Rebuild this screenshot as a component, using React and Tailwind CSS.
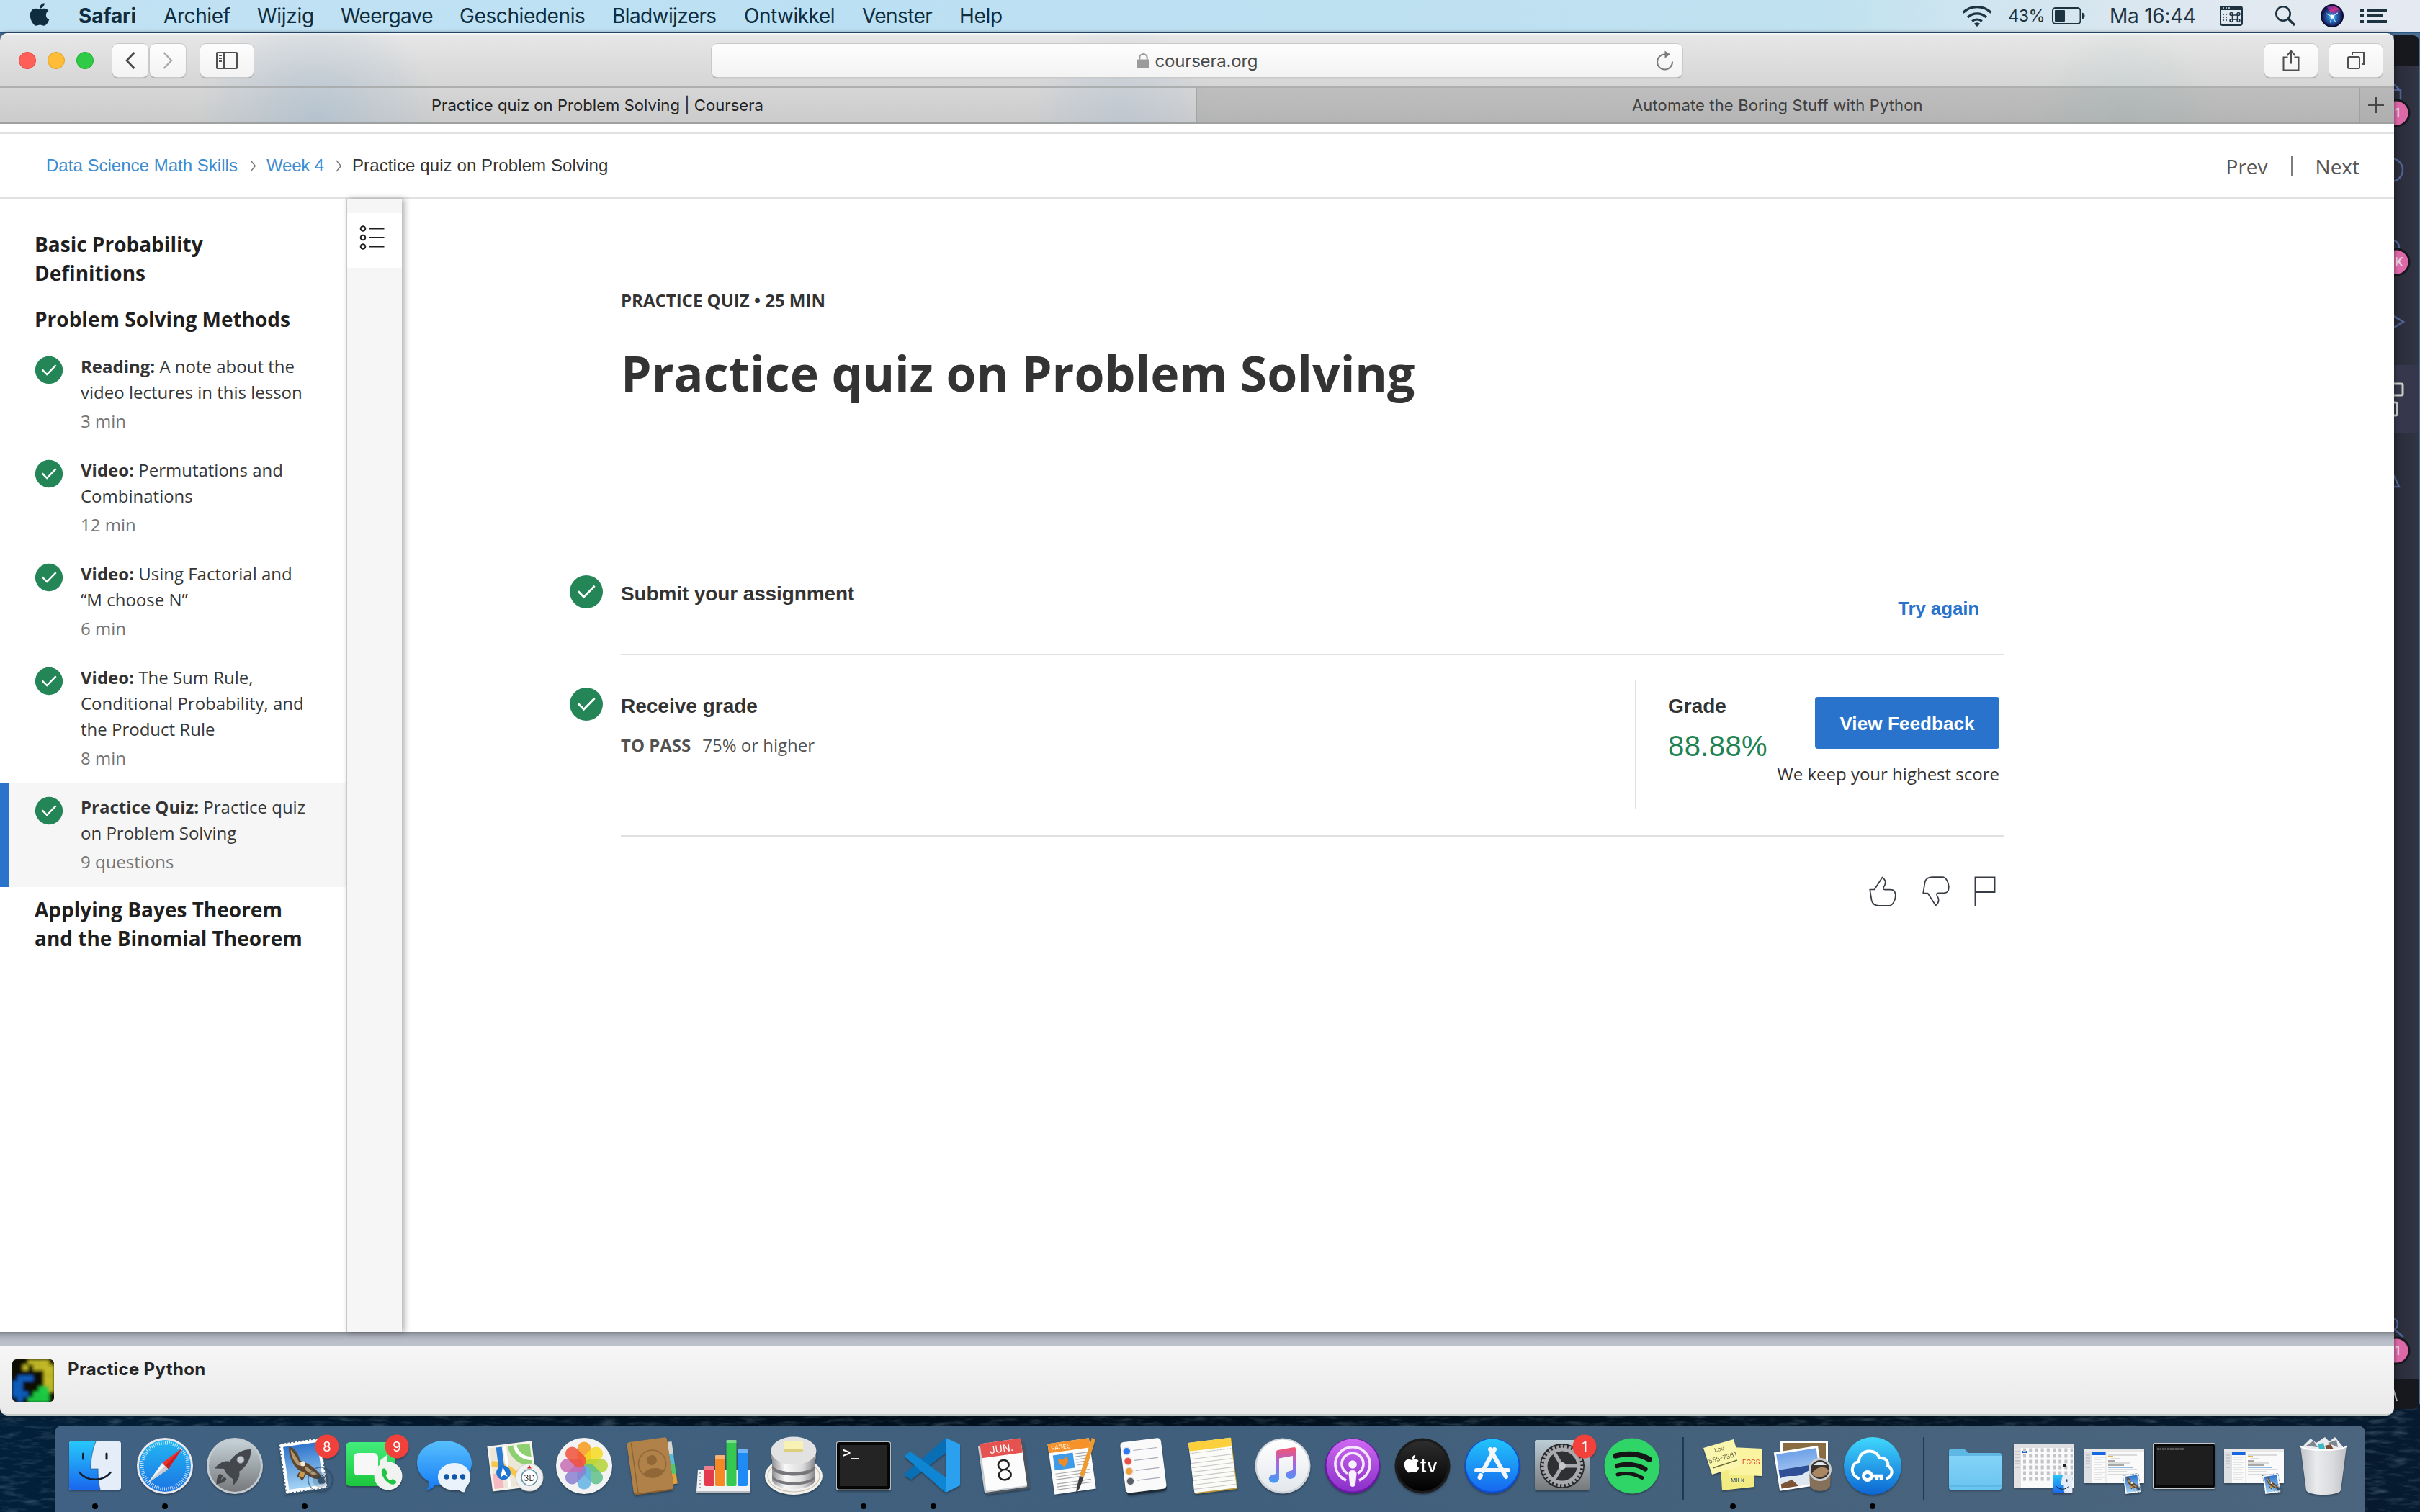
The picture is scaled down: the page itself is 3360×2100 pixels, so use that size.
import React from "react";
import { FaApple } from "react-icons/fa";

/* ---------- shared pieces ---------- */

const Check = ({ className }) => (
  <svg viewBox="0 0 48 48" className={className}>
    <circle cx="24" cy="24" r="23" fill="#248557" />
    <path d="M12.8 23.2 L20.6 31.2 L35.6 15.8" fill="none" stroke="#fff" strokeWidth="2.9" />
  </svg>
);

/* ---------- menu bar ---------- */

const MENU = [
  ["Archief", "w-[130px] tracking-[-0.4px]"],
  ["Wijzig", "w-[116px] tracking-[-0.3px]"],
  ["Weergave", "w-[165px] tracking-[-0.6px]"],
  ["Geschiedenis", "w-[212px] tracking-[-0.4px]"],
  ["Bladwijzers", "w-[183px] tracking-[-0.6px]"],
  ["Ontwikkel", "w-[164px] tracking-[-0.5px]"],
  ["Venster", "w-[135px] tracking-[-0.6px]"],
  ["Help", "w-[80px] tracking-[-0.3px]"],
];

function MenuBar() {
  return (
    <header className="flex h-[46px] shrink-0 items-center border-b-2 border-[#2c567e] bg-[linear-gradient(90deg,#c1e2f3_0%,#bce0f3_35%,#bfe1f0_75%,#cfe5ef_82%,#e0e8f0_92%,#e5eaf2_100%)] pl-[41px] text-[28px] leading-[44px] text-[#0f2d3e]">
      <FaApple className="-mt-[5px] mr-[40px] h-[36px] w-[28px]" />
      <span className="w-[118px] font-bold tracking-[-0.1px]">Safari</span>
      {MENU.map(([label, cls]) => (
        <span key={label} className={cls}>{label}</span>
      ))}
      <div className="ml-auto flex h-[44px] items-center pr-[46px] text-[#1d3340]">
        <svg viewBox="0 0 42 30" className="mr-[22px] h-[30px] w-[42px]" fill="none" stroke="currentColor" strokeWidth="3.2">
          <path d="M1.5 10.5 A28 28 0 0 1 40.500 10.500" />
          <path d="M8 17 A19 19 0 0 1 34 17" />
          <path d="M14.200 22.500 A10.500 10.500 0 0 1 27.800 22.500" />
          <path d="M21 30 L16.800 26 A6 6 0 0 1 25.200 26 Z" fill="currentColor" stroke="none" />
        </svg>
        <span className="w-[61px] text-[23.500px] tracking-[-0.6px]">43%</span>
        <svg viewBox="0 0 46 24" className="mr-[34px] h-[24px] w-[46px]">
          <rect x="1" y="1" width="38.500" height="22" rx="4" fill="none" stroke="currentColor" strokeWidth="2" />
          <rect x="4" y="4" width="14" height="16" rx="1" fill="currentColor" />
          <path d="M42 7.500 Q45.500 9 45.500 12 T42 16.500 Z" fill="currentColor" />
        </svg>
        <span className="w-[153px] tracking-[-0.25px]">Ma 16:44</span>
        <svg viewBox="0 0 32 28" className="mr-[44px] h-[28px] w-[32px]" fill="none" stroke="currentColor" strokeWidth="2">
          <rect x="1" y="1" width="30" height="26" rx="3" />
          <rect x="1" y="1" width="30" height="5" fill="currentColor" stroke="none" />
          <path d="M4 3 h2 M8 3 h2 M12 3 h2" stroke="#dce8f0" strokeWidth="1.600" />
          <path d="M4 12 h2 M8 12 h2 M4 16 h2 M8 16 h2 M4 20 h2 M8 20 h2" strokeWidth="1.600" />
          <g strokeWidth="1.500">
            <rect x="17.500" y="13" width="7" height="6" />
            <circle cx="16" cy="11.500" r="1.900" />
            <circle cx="26" cy="11.500" r="1.900" />
            <circle cx="16" cy="20.500" r="1.900" />
            <circle cx="26" cy="20.500" r="1.900" />
          </g>
        </svg>
        <svg viewBox="0 0 30 30" className="mr-[34px] h-[30px] w-[30px]" fill="none" stroke="currentColor" strokeWidth="2.600">
          <circle cx="12" cy="12" r="9.700" />
          <path d="M19 19 L28 28" strokeWidth="3.200" />
        </svg>
        <svg viewBox="0 0 32 32" className="mr-[23px] h-[32px] w-[32px]">
          <defs>
            <radialGradient id="siri" cx="0.500" cy="0.550" r="0.600">
              <stop offset="0" stopColor="#8df0ff" />
              <stop offset="0.300" stopColor="#2a7ac8" />
              <stop offset="0.800" stopColor="#181a5c" />
            </radialGradient>
            <linearGradient id="siri2" x1="0" y1="0" x2="0.600" y2="1">
              <stop offset="0" stopColor="#5a2a9a" />
              <stop offset="0.500" stopColor="#d0308c" />
              <stop offset="1" stopColor="#2448b0" stopOpacity="0.200" />
            </linearGradient>
          </defs>
          <circle cx="16" cy="16" r="16" fill="#0c1030" />
          <circle cx="16" cy="16" r="14" fill="url(#siri)" />
          <path d="M9 4 A14 14 0 0 1 29.500 14 L17 16 Z" fill="url(#siri2)" />
          <path d="M16 17 L8 13 M16 17 L13.500 25 M16 17 L23.500 12 M16 17 L20.500 24" stroke="#b9f5ff" strokeWidth="1.200" strokeLinecap="round" />
          <circle cx="16" cy="17" r="2.400" fill="#fff" />
        </svg>
        <svg viewBox="0 0 37 20" className="h-[20px] w-[37px]" fill="currentColor">
          <path d="M0 0h5v4H0z M9 0h28v4H9z M0 8h5v4H0z M9 8h22v4H9z M0 16h5v4H0z M9 16h28v4H9z" />
        </svg>
      </div>
    </header>
  );
}

/* ---------- Safari chrome ---------- */

const btn = "flex h-[46px] items-center justify-center rounded-[8px] bg-gradient-to-b from-[#fdfdfd] to-[#f3f3f3] shadow-[0_0_0_1px_#c9c9c9,0_2px_1px_0_#a0a0a0] text-[#4f4f4f]";

function Toolbar() {
  return (
    <div className="rounded-t-[10px] bg-[radial-gradient(ellipse_170px_170px_at_440px_125px,rgba(165,188,208,0.6),rgba(165,190,215,0)),radial-gradient(ellipse_130px_150px_at_1556px_130px,rgba(175,192,212,0.5),rgba(165,190,215,0)),radial-gradient(ellipse_130px_150px_at_2950px_125px,rgba(175,200,200,0.3),rgba(175,200,200,0)),linear-gradient(180deg,#fafafa_0px,#e6e6e6_4px,#d5d5d5_75px,#d6d6d6_76px,#cbcbcb_126px)]">
      <div className="flex h-[76px] items-center border-b-2 border-[#a9abab]/90 pl-[26px] pr-[16px] pt-[2px]">
        <div className="flex gap-[16px]">
          <i className="h-[24px] w-[24px] rounded-full border border-[#e0443e] bg-[#fe5f57]" />
          <i className="h-[24px] w-[24px] rounded-full border border-[#dea123] bg-[#febc38]" />
          <i className="h-[24px] w-[24px] rounded-full border border-[#1dad2b] bg-[#30cb46]" />
        </div>
        <div className="ml-[26px] flex gap-[2px]">
          <div className={`${btn} w-[50px]`}>
            <svg viewBox="0 0 14 24" className="h-[24px] w-[14px]" fill="none" stroke="#484848" strokeWidth="2.600"><path d="M12.500 1 L2 12 L12.500 23" /></svg>
          </div>
          <div className={`${btn} w-[50px]`}>
            <svg viewBox="0 0 14 24" className="h-[24px] w-[14px]" fill="none" stroke="#a8a8a8" strokeWidth="2.400"><path d="M1.500 1 L12 12 L1.500 23" /></svg>
          </div>
        </div>
        <div className={`${btn} ml-[20px] w-[74px]`}>
          <svg viewBox="0 0 30 24" className="h-[24px] w-[30px]" fill="none" stroke="currentColor" strokeWidth="2">
            <rect x="1" y="1" width="28" height="22" rx="1" />
            <path d="M11 1 V23" />
            <path d="M4 5 h4 M4 9 h4 M4 13 h4" />
          </svg>
        </div>
        <div className={`${btn} ml-[636px] w-[1348px]`}>
          <div className="ml-[38px] flex flex-1 items-center justify-center">
            <svg viewBox="0 0 18 22" className="mr-[8px] h-[21px] w-[17px]">
              <rect x="0" y="9" width="18" height="13" rx="1" fill="#9b9b9b" />
              <path d="M3.500 9 V6 a5.500 5 0 0 1 11 0 V9" fill="none" stroke="#9b9b9b" strokeWidth="2.200" />
            </svg>
            <span className="pt-[2px] text-[24px] leading-[44px] tracking-[-0.2px] text-[#4a4a4a]">coursera.org</span>
          </div>
          <svg viewBox="0 0 26 28" className="mr-[11px] h-[28px] w-[26px]" fill="none" stroke="#7b7b7b" strokeWidth="2">
            <path d="M23 15.500 A10.500 10.500 0 1 1 12.500 5.500 H19" />
            <path d="M12.500 0.500 L19.500 5.500 L12.500 11 Z" fill="#7b7b7b" stroke="none" />
          </svg>
        </div>
        <div className="ml-auto flex gap-[16px]">
          <div className={`${btn} w-[74px]`}>
            <svg viewBox="0 0 24 30" className="h-[30px] w-[24px]" fill="none" stroke="currentColor" strokeWidth="2">
              <path d="M7.500 10.500 H1.500 V28.500 H22.500 V10.500 H16.500" />
              <path d="M12 19.500 V2 M6.500 8 L12 1.800 L17.500 8" />
            </svg>
          </div>
          <div className={`${btn} w-[74px]`}>
            <svg viewBox="0 0 24 24" className="h-[24px] w-[24px]" fill="none" stroke="currentColor" strokeWidth="2">
              <rect x="1" y="7" width="16" height="16" rx="1.500" />
              <path d="M7 4.500 V1 H23 V17 H20" />
            </svg>
          </div>
        </div>
      </div>
      <div className="flex h-[50px] border-b-2 border-[#9fa0a0] text-[22px] leading-[49px]">
        <div className="w-[1660px] pl-[599px] tracking-[0.06px] text-[#222]">Practice quiz on Problem Solving | Coursera</div>
        <div className="w-[1615px] border-l-2 border-[#9c9c9c]/70 bg-black/[0.11] pl-[604px] tracking-[0.150px] text-[#404040]">Automate the Boring Stuff with Python</div>
        <div className="flex flex-1 items-center justify-center border-l-2 border-[#9c9c9c]/80 bg-black/[0.14] pr-[4px]">
          <svg viewBox="0 0 22 22" className="h-[22px] w-[22px]" stroke="#484848" strokeWidth="2"><path d="M11 0 V22 M0 11 H22" /></svg>
        </div>
      </div>
    </div>
  );
}

/* ---------- course page ---------- */

const Crumb = () => (
  <svg viewBox="0 0 9 18" className="h-[17px] w-[9px]" fill="none" stroke="#777" strokeWidth="1.500"><path d="M1 1 L7.500 9 L1 17" /></svg>
);

const LESSONS = [
  { kind: "Reading:", lines: ["A note about the", "video lectures in this lesson"], meta: "3 min" },
  { kind: "Video:", lines: ["Permutations and", "Combinations"], meta: "12 min" },
  { kind: "Video:", lines: ["Using Factorial and", "“M choose N”"], meta: "6 min" },
  { kind: "Video:", lines: ["The Sum Rule,", "Conditional Probability, and", "the Product Rule"], meta: "8 min" },
  { kind: "Practice Quiz:", lines: ["Practice quiz", "on Problem Solving"], meta: "9 questions", active: true },
];

function Sidebar() {
  const heading = "pb-[13px] pt-[11px] pl-[48px] text-[28px] font-bold leading-[40px] text-[#1f1f1f]";
  return (
    <aside className="w-[480px] pt-[32px] font-['Open_Sans',sans-serif]">
      <h2 className={heading}>Basic Probability<br />Definitions</h2>
      <h2 className={heading}>Problem Solving Methods</h2>
      {LESSONS.map((l) => (
        <div
          key={l.kind + l.meta}
          className={`flex border-l-[12px] pb-[17px] pl-[36px] pt-[15px] ${l.active ? "border-[#2a73cc] bg-[#f6f6f6]" : "border-transparent"}`}
        >
          <Check className="mr-[24px] mt-[3px] h-[40px] w-[40px] shrink-0" />
          <div className="text-[24px] leading-[36px] text-[#373737]">
            {l.lines.map((t, i) => (
              <div key={t} className="whitespace-nowrap">
                {i === 0 && <b className="font-bold text-[#333]">{l.kind} </b>}
                {t}
              </div>
            ))}
            <div className="mt-1 text-[#757575]">{l.meta}</div>
          </div>
        </div>
      ))}
      <h2 className={heading}>Applying Bayes Theorem<br />and the Binomial Theorem</h2>
    </aside>
  );
}

function Quiz() {
  const label = "text-[28px] font-bold leading-[36px] text-[#333]";
  return (
    <main className="flex-1 pl-[232px] pt-[123px] font-['Open_Sans',sans-serif] text-[#333]">
      <div className="pl-[72px]">
        <div className="text-[24px] font-bold leading-[36px]">PRACTICE QUIZ • 25 MIN</div>
        <h1 className="pt-[35px] text-[68px] font-bold leading-[96px] tracking-[-0.03px]">Practice quiz on Problem Solving</h1>
      </div>
      <section className="mt-[220px] w-[1992px]">
        <div className="flex">
          <div className="w-[72px] pt-[12px]"><Check className="h-[48px] w-[48px]" /></div>
          <div className="flex h-[124px] flex-1 justify-between border-b-2 border-[#e1e1e1] pt-[21px] font-['Liberation_Sans',sans-serif]">
            <div className={`${label} tracking-[-0.12px]`}>Submit your assignment</div>
            <div className="pr-[34px] pt-[20px] text-[26px] font-bold leading-[36px] tracking-[-0.15px] text-[#2a73cc]">Try again</div>
          </div>
        </div>
        <div className="flex">
          <div className="w-[72px] pt-[44px]"><Check className="h-[48px] w-[48px]" /></div>
          <div className="flex h-[252px] flex-1 border-b-2 border-[#e1e1e1]">
            <div className="w-[1408px] pt-[53px]">
              <div className={`${label} font-['Liberation_Sans',sans-serif]`}>Receive grade</div>
              <div className="flex gap-[16px] pt-[18px] text-[24px] leading-[36px] text-[#525252]">
                <b className="font-bold">TO PASS</b>
                <span>75% or higher</span>
              </div>
            </div>
            <div className="mt-[34px] flex h-[180px] flex-1 justify-between border-l-2 border-[#e1e1e1] pl-[44px]">
              <div className="w-[150px] pt-[19px] font-['Liberation_Sans',sans-serif]">
                <div className={label}>Grade</div>
                <div className="pt-[13px] text-[40px] leading-[48px] tracking-[0.4px] text-[#1f8354]">88.88%</div>
              </div>
              <div className="-ml-8 flex flex-1 flex-col items-end pr-[6px] pt-[24px]">
                <button className="h-[72px] w-[256px] rounded-[4px] bg-[#2a73cc] pt-[2px] font-['Liberation_Sans',sans-serif] text-[26px] font-bold tracking-[0.1px] text-white">View Feedback</button>
                <div className="whitespace-nowrap pt-[17px] text-[24px] leading-[36px]">We keep your highest score</div>
              </div>
            </div>
          </div>
        </div>
        <div className="flex justify-end pr-[11px] pt-[55px]">
          <Thumb className="h-[42px] w-[38px]" />
          <Thumb className="ml-[36px] h-[42px] w-[38px] -scale-y-100" />
          <svg viewBox="0 0 30 42" className="ml-[34px] h-[42px] w-[30px]" fill="none" stroke="#373c44" strokeWidth="1.900">
            <path d="M1.500 41 V1.500 H28.500 V22 H1.500" />
          </svg>
        </div>
      </section>
    </main>
  );
}

const Thumb = ({ className }) => (
  <svg viewBox="0 0 38 42" className={className} fill="none" stroke="#373c44" strokeWidth="1.700" strokeLinejoin="round">
    <path d="M1.200 18.500 H7.500 L18.500 1.500 C22 4 23.500 8 22 12 C21 14.500 19.500 15.500 20 17.500 C20.300 18.500 21 18.700 22 18.700 H30 C34.500 18.700 36.800 22 36.800 27 C36.800 33 33 40.800 28 40.800 H14 C8 40.800 4.800 39 3.600 33.500 Z" />
  </svg>
);

function Page() {
  return (
    <div className="flex h-[1678px] flex-col bg-white">
      <div className="h-[14px] border-b-2 border-[#e1e1e1]" />
      <nav className="flex h-[90px] items-center whitespace-nowrap border-b-2 border-[#e1e1e1] pl-[64px] font-['Liberation_Sans',sans-serif] text-[24px]">
        <span className="w-[283px] tracking-[0.02px] text-[#3d8ccf]">Data Science Math Skills</span>
        <Crumb />
        <span className="w-[110px] pl-[14px] tracking-[-0.2px] text-[#3d8ccf]">Week 4</span>
        <Crumb />
        <span className="pl-[14px] tracking-[0.1px] text-[#333]">Practice quiz on Problem Solving</span>
        <div className="ml-auto flex items-center pr-[48px] pt-[2px] font-['Open_Sans',sans-serif] text-[28px] text-[#555]">
          <span>Prev</span>
          <span className="mx-[32px] h-[28px] w-[2px] bg-[#7d7d7d]" />
          <span>Next</span>
        </div>
      </nav>
      <div className="flex flex-1">
        <Sidebar />
        <div className="w-[78px] border-l-2 border-[#c7c9c9] bg-[#f6f6f6] pt-[20px] shadow-[4px_0_8px_rgba(0,0,0,0.3)]">
          <div className="flex h-[76px] rounded-[2px] bg-white pl-[16px] pt-[16px]">
            <svg viewBox="0 0 36 36" className="h-[36px] w-[36px]" fill="none" stroke="#1f1f1f" strokeWidth="2">
              {[5.500, 18, 30.500].map((y) => (
                <g key={y}>
                  <circle cx="6" cy={y} r="3.300" />
                  <path d={`M14 ${y} H35.500`} />
                </g>
              ))}
            </svg>
          </div>
        </div>
        <Quiz />
      </div>
    </div>
  );
}

const PY = [
  "kkkyyyyk",
  "kkykyyyy",
  "kkkkkkyy",
  "kbbbkkyy",
  "bbkkkkyy",
  "bbkkkggy",
  "bbbkgggk",
  "kbkggggk",
];
const PYC = { k: "#0a0a06", y: "#c3bb25", b: "#0b5ec0", g: "#1fcb42" };

function ReadingPanel() {
  return (
    <div className="flex h-[96px] rounded-b-[10px] border-b-2 border-[#c4cac7] bg-gradient-to-b from-[#f6f6f6] to-[#e9e9e9] pl-[17px] pt-[18px]">
      <svg viewBox="0 0 58 60" className="h-[60px] w-[58px]">
        <clipPath id="pyc"><rect width="58" height="59" rx="6" /></clipPath>
        <filter id="pyb" x="0" y="0" width="1" height="1"><feGaussianBlur stdDeviation="2" /></filter>
        <g clipPath="url(#pyc)">
          <rect width="58" height="60" fill="#0a0a06" />
          <g filter="url(#pyb)">
            {PY.map((r, y) => r.split("").map((c, x) => (
              <rect key={`${x}-${y}`} x={x * 7.300} y={y * 7.500} width="7.500" height="7.700" fill={PYC[c]} />
            )))}
          </g>
        </g>
      </svg>
      <span className="pl-[19px] text-[24px] font-bold leading-[27px] tracking-[0.350px] text-[#262626]">Practice Python</span>
    </div>
  );
}

/* ---------- window peeking out behind Safari ---------- */

function BackWindow() {
  return (
    <div className="mt-[2px] h-[1909px] w-[35px] overflow-hidden rounded-r-[10px] border-t border-[#555a66] bg-[#2f3241]">
      <svg viewBox="0 0 36 1909" className="h-[1909px] w-[36px]" fill="none">
        <defs>
          <linearGradient id="bw" x1="0" x2="1"><stop offset="0" stopColor="#292b38" /><stop offset="1" stopColor="#323545" /></linearGradient>
        </defs>
        <rect width="36" height="1909" fill="url(#bw)" />
        <rect width="36" height="42" fill="#16181e" />
        <rect y="1866" width="36" height="43" fill="#16181e" />
        <path d="M-3 1897 L0 1884 L4 1897" stroke="#b9bcb8" strokeWidth="2.200" />
        <g stroke="#4f6294" strokeWidth="2.500">
          <path d="M-2 66 L8 76 H-2 M9 74 V98" />
          <circle cx="-4" cy="187" r="16" />
          <circle cx="-2" cy="294" r="9" />
          <path d="M-2 389 L13 398 L-2 407" />
          <path d="M-2 608 L7 627 H-2" />
          <circle cx="-3" cy="1790" r="8" />
          <path d="M0 1797 L13 1808" />
        </g>
        <rect y="458" width="36" height="95" fill="#36364c" />
        <rect x="34" y="458" width="2" height="95" fill="#c25a9a" />
        <g stroke="#c8cdc4" strokeWidth="3">
          <rect x="-8" y="484" width="20" height="16" rx="2" />
          <rect x="-8" y="510" width="12" height="18" rx="2" />
        </g>
        <g stroke="#16181e" strokeWidth="3" fill="#dd68a8">
          <circle cx="3" cy="108" r="18" />
          <circle cx="3" cy="315" r="18" />
          <circle cx="3" cy="1827" r="18" />
        </g>
        <g fill="#e6d3dd" fontSize="17" fontWeight="600" fontFamily="Inter, sans-serif">
          <text x="1" y="114">1</text>
          <text x="1" y="321">K</text>
          <text x="1" y="1833">1</text>
        </g>
      </svg>
    </div>
  );
}

/* ---------- dock ---------- */

const G = ({ id, a, b, m }) => (
  <linearGradient id={id} x1="0" y1="0" x2="0" y2="1">
    <stop offset="0" stopColor={a} />
    {m && <stop offset="0.500" stopColor={m} />}
    <stop offset="1" stopColor={b} />
  </linearGradient>
);

const FinderArt = () => (
  <g>
    <rect x="4" y="6" width="72" height="67" rx="3" fill="#e4edf8" />
    <path d="M7 6 H41 C36 18 34 30 34 44 H44 C44 55 45 65 47 73 H7 a3 3 0 0 1 -3 -3 V9 a3 3 0 0 1 3 -3Z" fill="url(#fnd)" />
    <path d="M41 6 C36 18 34 30 34 44 H44 C44 55 45 65 47 73" fill="none" stroke="#1d4f86" strokeWidth="1.200" opacity="0.600" />
    <path d="M23.500 23 V30 M56 23 V30" stroke="#12202e" strokeWidth="3" strokeLinecap="round" />
    <path d="M18.500 49 C28 62 52 62 61.500 49" fill="none" stroke="#12202e" strokeWidth="2.600" strokeLinecap="round" />
  </g>
);

const Badge = ({ t }) => (
  <g>
    <circle cx="71" cy="13" r="16.500" fill="#f2403a" />
    <text x="71" y="19.500" textAnchor="middle" fontSize="19" fill="#fff" fontFamily="Inter, sans-serif">{t}</text>
  </g>
);

const MailArt = () => (
  <g>
    <g transform="rotate(-8 38 40)">
      <rect x="9" y="5" width="58" height="70" fill="#fff" />
      <rect x="9" y="5" width="58" height="70" fill="none" stroke="#40607f" strokeWidth="3" strokeDasharray="2 3" />
      <rect x="10.500" y="6.500" width="55" height="67" fill="#fff" />
      <rect x="14" y="10" width="48" height="60" fill="url(#sky)" />
      <path d="M22 11 C30 13 33 22 35 32 L40 35 C49 40 57 49 61 58 C56 63 50 60 44 55 L40 52 L36 58 L33 60 L31 55 L27 55 L29 50 L33 46 C26 42 19 26 22 11Z" fill="#5f452e" />
      <path d="M24 15 C29 22 32 32 36 40 L31 38 C26 32 23 24 24 15Z" fill="#b29870" />
      <path d="M40 40 L56 54 L50 55 L41 47 Z" fill="#b29870" />
      <path d="M33 46 L39 50 L36 56 L30 53Z" fill="#c99a4c" />
      <circle cx="38" cy="37" r="3.500" fill="#f3ead8" />
    </g>
    <circle cx="62" cy="59" r="17" fill="none" stroke="#26425f" strokeWidth="1.500" opacity="0.600" />
    <circle cx="62" cy="59" r="11" fill="#26425f" opacity="0.250" />
    <g transform="translate(55.500 50)"><FaApple size={16} color="#1f3c58" opacity="0.800" /></g>
  </g>
);

const WindowArt = () => (
  <g>
    <rect x="-1" y="16" width="83" height="48" fill="#fafafa" />
    <rect x="-1" y="16" width="11" height="48" fill="#dedfe2" />
    <rect x="-1" y="16" width="83" height="5" fill="#e8e8e8" />
    <path d="M1 25h6M1 29h6M1 33h6M1 37h6M1 42h6" stroke="#b5b5b8" strokeWidth="1" />
    <rect x="10" y="21" width="19" height="4" fill="#1768e0" />
    <path d="M12 28h15M12 31h12M12 35h15M12 38h12M12 42h15M12 45h12M12 49h15M12 52h12M12 56h15M12 59h12" stroke="#cfcfcf" strokeWidth="1" />
    <path d="M29 21V64" stroke="#ddd" />
    <path d="M32 25h40M36 30h12M32 36h30M32 45h40M32 48h26M32 52h28" stroke="#bbb" strokeWidth="1" />
    <path d="M32 27h7" stroke="#e8b44a" strokeWidth="2" />
    <path d="M32 33h9M32 39h22" stroke="#555" strokeWidth="1.200" />
    <path d="M32 42h34" stroke="#6ba6e2" strokeWidth="1.300" />
    <g transform="translate(51 50) scale(0.370)"><MailArt /></g>
  </g>
);

const Petals = () => {
  const c = ["#f79a1c", "#f5d91f", "#b4d334", "#5fc08a", "#62b3e4", "#8a7fd0", "#c56cb5", "#f0513a"];
  return c.map((f, i) => (
    <rect key={f} x="30.500" y="6.500" width="19" height="33" rx="9.500" fill={f} opacity="0.850" transform={`rotate(${i * 45} 40 39.500)`} />
  ));
};

const ART = {
  finder: <FinderArt />,
  safari: (
    <g>
      <circle cx="40" cy="40" r="39" fill="#e9e9ec" />
      <circle cx="40" cy="40" r="36" fill="url(#saf)" />
      <circle cx="40" cy="40" r="32" fill="none" stroke="#fff" strokeWidth="5" strokeDasharray="0.900 1.890" opacity="0.850" />
      <path d="M64.500 15 L44.500 44.500 L36 36Z" fill="#f0302c" />
      <path d="M64.500 15 L44.500 44.500 L40 40Z" fill="#c9201f" />
      <path d="M16 64 L36 36 L44.500 44.500Z" fill="#f4f4f6" />
      <path d="M16 64 L40 40 L44.500 44.500Z" fill="#c9ccd2" />
    </g>
  ),
  launchpad: (
    <g>
      <circle cx="40" cy="40" r="39" fill="#c3cbd1" />
      <circle cx="40" cy="40" r="36" fill="url(#lp)" />
      <path d="M62.500 17 C50 17 40 23 33 34 C25 32 17 37 12 43.500 L25 44 L28 50 L34 56 L37 58 V68 C43 62 48 55 46 48 C57 40 62.500 30 62.500 17Z" fill="#44484c" />
      <circle cx="48" cy="31.500" r="5" fill="#c3cacf" stroke="#808589" />
      <path d="M19 51 C15 54 15 60 14.500 66 C20 64 27 63 28.500 58 L25.500 55 L20 60 L24 53Z" fill="#44484c" />
    </g>
  ),
  mail: <g><MailArt /><Badge t="8" /></g>,
  facetime: (
    <g>
      <rect x="0" y="7" width="69" height="61" rx="6" fill="url(#ft)" />
      <rect x="11" y="22" width="34" height="31" rx="6" fill="#f7f7f7" />
      <path d="M47 33 L58 24 V50 L47 43Z" fill="#f0f0f0" />
      <circle cx="59" cy="54" r="19.500" fill="#f1f3f1" />
      <path d="M50 46 c2 -4 5 -3 6 0 l1.500 3 c1 2 -2 3 -1.500 4.500 c1 3 3 5 5.500 6.500 c1.500 .5 2.500 -2.500 4.500 -1.500 l3 2 c2.500 2 .5 4 -2 5 c-8 2 -19 -12 -17 -19.500Z" fill="#20c544" />
      <Badge t="9" />
    </g>
  ),
  messages: (
    <g>
      <path d="M40 5 C61 5 78 18.500 78 36 S61 67 40 67 C36 67 32 66.500 28 65.500 C25 70 20 73 15 73.500 C18 70 19.500 66 19 62 C8.500 56.500 2 47 2 36 C2 18.500 19 5 40 5Z" fill="url(#msg)" />
      <path d="M54 36 C66 36 76 44 76 55.500 C76 61 74 66 70 69.500 C69.500 72.500 68.500 74.500 67.500 76.500 C64.500 76.500 62 75 60 73.500 C43 76 31 67 31 55.500 C31 44 42 36 54 36Z" fill="#eaf3fb" />
      <g fill="#1057a8"><circle cx="43" cy="55" r="3.700" /><circle cx="54" cy="55" r="3.700" /><circle cx="65.500" cy="55" r="3.700" /></g>
    </g>
  ),
  maps: (
    <g>
      <g transform="rotate(-7 36 40)">
        <rect x="6" y="9" width="62" height="63" fill="#f4f2ea" />
        <rect x="9" y="12" width="56" height="57" fill="#ece7d8" />
        <path d="M34 12 H65 V42 C48 42 36 30 34 12Z" fill="#8ecf72" />
        <path d="M44 12 C46 24 54 32 65 33" fill="none" stroke="#fff" strokeWidth="5" />
        <path d="M9 34 C25 36 45 50 52 69" fill="none" stroke="#f9c64a" strokeWidth="8" />
        <path d="M9 48 H22 V69 H9Z" fill="#f6b9c1" />
        <path d="M22 12 V50" stroke="#2a7bd4" strokeWidth="8" />
        <path d="M30 12 V69" stroke="#fff" strokeWidth="4" />
        <circle cx="24" cy="48" r="10" fill="#1d74d2" />
        <path d="M24 40 L29 54 L24 51 L19 54Z" fill="#fff" />
      </g>
      <circle cx="61" cy="56" r="19" fill="#f0f0f0" stroke="#c9c9c9" />
      <circle cx="61" cy="56" r="11" fill="#fff" stroke="#5b93a8" strokeWidth="1.500" />
      <path d="M61 39 L64 43.500 H58Z" fill="#d22" />
      <text x="61" y="60.500" textAnchor="middle" fontSize="11.500" fill="#333" fontFamily="Inter, sans-serif">3D</text>
    </g>
  ),
  photos: (
    <g>
      <circle cx="40" cy="40" r="39" fill="#f3f3f3" />
      <Petals />
    </g>
  ),
  contacts: (
    <g transform="rotate(-8 38 40)">
      <rect x="58" y="10" width="11" height="20" fill="#d6d6cf" />
      <rect x="58" y="27" width="11" height="15" fill="#58b9d8" />
      <rect x="58" y="41" width="11" height="15" fill="#55c46a" />
      <rect x="58" y="55" width="11" height="14" fill="#e3a13a" />
      <rect x="7" y="4" width="56" height="73" rx="4" fill="#8a5f30" />
      <rect x="7" y="3" width="56" height="72" rx="4" fill="#b08149" />
      <path d="M13 4 V75" stroke="#8f6533" strokeWidth="1.500" />
      <circle cx="38" cy="37" r="19" fill="none" stroke="#916737" strokeWidth="1.600" />
      <circle cx="38" cy="32" r="7" fill="#916737" />
      <path d="M24 50 C27 41 49 41 52 50 C45 58 31 58 24 50Z" fill="#916737" />
    </g>
  ),
  numbers: (
    <g>
      <path d="M4 45 H76 L77 75 H2Z" fill="#f3f3f5" />
      <path d="M2 75 H77 V77 H2Z" fill="#b9bcc2" />
      <rect x="13" y="40" width="14" height="28" rx="2" fill="#e33a4d" />
      <rect x="28" y="25" width="14" height="43" rx="2" fill="#f58a24" />
      <rect x="43.500" y="4" width="14" height="64" rx="2" fill="#35c951" />
      <rect x="59" y="17" width="14" height="51" rx="2" fill="#1f8cf5" />
      <g fill="#fff" opacity="0.350">
        <rect x="13" y="40" width="14" height="5" /><rect x="28" y="25" width="14" height="5" /><rect x="43.500" y="4" width="14" height="4" /><rect x="59" y="17" width="14" height="5" />
      </g>
      <path d="M7 49v2M7 54v2M7 59v2M7 64v2M7 69v2" stroke="#aaa" strokeWidth="2" />
    </g>
  ),
  sequel: (
    <g>
      <ellipse cx="40" cy="54" rx="40" ry="26" fill="#f2f1ee" />
      <ellipse cx="40" cy="54" rx="36" ry="22" fill="none" stroke="#c9c0ae" strokeWidth="1.200" />
      <path d="M10 30 V60 C14 76 66 76 70 60 V30Z" fill="url(#met)" />
      <path d="M10 38 C14 52 66 52 70 38 V43 C66 57 14 57 10 43Z M10 52 C14 66 66 66 70 52 V56 C66 70 14 70 10 56Z" fill="#77777b" />
      <path d="M9 20 V29 C12 48 68 48 71 29 V20Z" fill="url(#met)" />
      <ellipse cx="40" cy="19" rx="31.500" ry="19.500" fill="#e2e2e3" />
      <rect x="27" y="5" width="26" height="15" rx="3" fill="#f8f2b4" />
      <path d="M27 17 H53 V18 a3 3 0 0 1 -3 3 H30 a3 3 0 0 1 -3 -3Z" fill="#dccf7c" />
    </g>
  ),
  terminal: (
    <g>
      <rect x="2" y="6" width="76" height="68" rx="3" fill="#b9bcbf" />
      <rect x="3" y="7" width="74" height="65.500" rx="3" fill="#070707" />
      <rect x="7" y="11" width="66" height="57" fill="#242424" />
      <text x="11" y="28" fontSize="19" fontWeight="700" fill="#fff" fontFamily="Liberation Mono, monospace">&gt;_</text>
    </g>
  ),
  vscode: (
    <g>
      <path d="M57 1 L77 10 V67 L57 77 Z" fill="#2aa0ee" />
      <path d="M57 1 V22 L9 59 L1 54 V50Z" fill="#0a6eb4" />
      <path d="M8 20 L57 56 V77 L1 28 V25Z" fill="#0f86d4" />
    </g>
  ),
  calendar: (
    <g transform="translate(2 0) rotate(-8 40 40)">
      <rect x="9" y="10" width="62" height="66" rx="2" fill="#4b5660" />
      <rect x="7" y="7" width="60" height="66" rx="2" fill="#c8ccd0" />
      <rect x="10" y="5" width="57" height="66" rx="2" fill="#fcfcfc" />
      <path d="M10 5 H67 V25 H10Z" fill="#e5524f" />
      <text x="38.500" y="20.500" textAnchor="middle" fontSize="14" fill="#fff" fontFamily="Inter, sans-serif">JUN.</text>
      <text x="38.500" y="60" textAnchor="middle" fontSize="40" fill="#222" fontFamily="Inter, sans-serif" fontWeight="300">8</text>
    </g>
  ),
  pages: (
    <g>
      <g transform="rotate(-8 38 40)">
        <rect x="9" y="5" width="58" height="71" fill="#fbfbfb" />
        <rect x="9" y="5" width="58" height="13" fill="#f6922a" />
        <text x="13" y="15" fontSize="8.500" fill="#fff" fontFamily="Inter, sans-serif">PAGES</text>
        <rect x="14" y="22" width="28" height="21" fill="#3f9ae8" />
        <path d="M20 27 L26 30 L33 26 L34 33 L28 40 L22 35Z" fill="#f08a24" />
        <path d="M45 24h17M45 28h17M45 32h17M45 36h17M45 40h17M14 48h48M14 52h48M14 56h38M14 62h48M14 66h48M14 70h30" stroke="#aaa" strokeWidth="1.200" />
      </g>
      <path d="M66 1 L71 3 L55 55 L49 53Z" fill="#ef9a2c" />
      <path d="M54.500 56 L49 54 L45 70 L44 78 L49 71Z" fill="#3c3c40" />
    </g>
  ),
  reminders: (
    <g transform="rotate(-7 40 40)">
      <rect x="13" y="5" width="56" height="73" rx="5" fill="#1e2a36" />
      <rect x="12" y="4" width="57" height="71" rx="5" fill="#fafafa" />
      {[["#2c79f3", 17], ["#eb4f45", 31], ["#f0a03a", 45], ["#59606a", 59]].map(([f, y]) => (
        <g key={f}>
          <circle cx="20" cy={y} r="6" fill="#e4e4e8" />
          <circle cx="20" cy={y} r="4.700" fill={f} />
          <path d={`M29 ${y} H62`} stroke="#aab" strokeWidth="1.200" />
        </g>
      ))}
    </g>
  ),
  notes: (
    <g transform="rotate(-7 40 40)">
      <rect x="11" y="5" width="59" height="71" fill="#b89a3c" />
      <rect x="10" y="4" width="59" height="70" fill="#fbfbf8" />
      <rect x="10" y="4" width="59" height="12" fill="#fccf3c" />
      <path d="M11 19H68" stroke="#999" strokeDasharray="1 1" />
      <path d="M10 27h59M10 33h59M10 39h59M10 45h59M10 51h59M10 57h59M10 63h59M10 69h59" stroke="#c9c9cc" strokeWidth="1.200" />
    </g>
  ),
  music: (
    <g>
      <circle cx="40" cy="40" r="38.500" fill="#cfd4da" />
      <circle cx="40" cy="39.500" r="36" fill="url(#mus)" />
      <path d="M31 20 Q31 18.500 33 18 L56 14 Q58 14 58 16 V51 C58 56 54 58 50 58 C42 57 43 48 50 47 C53 46.500 54 46 54 43.500 V26 L35 29.500 V57 C35 62 30 64 26 63.500 C18 61.500 20 53 27 52 C30 51.500 31 51 31 49Z" fill="url(#mun)" />
    </g>
  ),
  podcasts: (
    <g>
      <circle cx="40" cy="40" r="38.500" fill="#6d17a8" />
      <circle cx="40" cy="39" r="36.500" fill="url(#pod)" />
      <g fill="none" stroke="#f4e8fc" strokeWidth="3.600">
        <path d="M31 60 A24 24 0 1 1 49 60" />
        <path d="M33 50.500 A15 15 0 1 1 47 50.500" />
      </g>
      <circle cx="40" cy="38" r="5.800" fill="#f8f0fd" />
      <path d="M34.500 51 Q34.500 46 40 46 T45.500 51 L44 65 Q43 69 40 69 T36 65Z" fill="#f8f0fd" />
    </g>
  ),
  tv: (
    <g>
      <circle cx="40" cy="40" r="38.500" fill="#1c1c1c" />
      <circle cx="40" cy="40" r="35" fill="url(#tvg)" />
      <g transform="translate(11 23)"><FaApple size={28} color="#fff" /></g>
      <text x="37" y="49" fontSize="26" fontWeight="500" fill="#fff" fontFamily="Inter, sans-serif" letterSpacing="-0.500">tv</text>
    </g>
  ),
  appstore: (
    <g>
      <circle cx="40" cy="40" r="38.500" fill="#0d4fd0" />
      <circle cx="40" cy="39" r="36.500" fill="url(#aps)" />
      <g stroke="#f4f7fa" strokeWidth="6" strokeLinecap="round">
        <path d="M43 17 L27 47" /><path d="M37 17 L59 55" /><path d="M18 46 H62" /><path d="M24 53 L22.500 56" />
      </g>
    </g>
  ),
  prefs: (
    <g>
      <rect x="2" y="4" width="76" height="70" rx="3" fill="url(#prf)" />
      <circle cx="40" cy="40" r="31" fill="#26282b" />
      <circle cx="40" cy="40" r="27" fill="none" stroke="#a2a4a7" strokeWidth="4.500" strokeDasharray="3.500 2.150" />
      <circle cx="40" cy="40" r="23" fill="#2e3033" stroke="#a8aaad" strokeWidth="5" />
      <path d="M40 40 L28 20 M40 40 H62 M40 40 L28 60" stroke="#a8aaad" strokeWidth="5" />
      <circle cx="40" cy="40" r="5" fill="#c5c7ca" />
      <Badge t="1" />
    </g>
  ),
  spotify: (
    <g>
      <circle cx="40" cy="40" r="38.500" fill="#2fd566" />
      <g fill="none" stroke="#161616" strokeLinecap="round">
        <path d="M17 26 C33 21.500 51 23 64 31" strokeWidth="7.500" />
        <path d="M19 40 C32 36 47 37.500 58.500 44.500" strokeWidth="6.200" />
        <path d="M20 52 C32 49 43 50.500 54 56.500" strokeWidth="5" />
      </g>
    </g>
  ),
  stickies: (
    <g>
      <path d="M23 40 L68 38 L70 69 L25 74Z" fill="#f3ec82" />
      <path d="M38 14 L81 16 L80 54 L34 52Z" fill="#faf4a0" />
      <path d="M-1 15 L41 3 L52 40 L11 52Z" fill="#faf6ae" />
      <g fontFamily="Inter, sans-serif" fill="#6b6b3a">
        <text x="15" y="21" fontSize="8" transform="rotate(-14 15 21)">Lou</text>
        <text x="7" y="37" fontSize="9" transform="rotate(-15 7 37)">555-7361</text>
        <text x="53" y="38" fontSize="9" fill="#d53a2a">EGGS</text>
        <text x="37" y="63" fontSize="8" fill="#2d4a78">MILK</text>
      </g>
      <path d="M12 43 L46 32" stroke="#6b6b3a" strokeWidth="1.400" />
    </g>
  ),
  preview: (
    <g>
      <rect x="9" y="6" width="66" height="50" fill="#fff" />
      <rect x="12" y="8" width="60" height="46" fill="#8a6c42" />
      <g transform="rotate(-9 30 40)">
        <rect x="3" y="17" width="62" height="54" fill="#fff" />
        <rect x="6" y="20" width="56" height="48" fill="url(#sky2)" />
        <rect x="6" y="42" width="56" height="14" fill="#2e4f96" />
        <path d="M6 54 C18 48 28 58 40 52 S56 50 62 48 V68 H6Z" fill="#dfe7f0" />
        <path d="M6 62 L22 58 L30 68 H6Z" fill="#7c5335" />
      </g>
      <path d="M49 45 L50 68 C54 77 74 77 78 68 L79 45Z" fill="#85705a" />
      <circle cx="64" cy="45" r="16" fill="#c9ccd0" />
      <circle cx="64" cy="45" r="13" fill="#39322c" />
      <path d="M53 50 C58 42 70 38 76 46 C74 56 58 60 53 50Z" fill="#a98763" />
      <path d="M55 39 C59 33 69 33 73 39Z" fill="#dfe6ec" />
    </g>
  ),
  cloud: (
    <g>
      <circle cx="40" cy="40" r="40" fill="url(#cld)" />
      <path d="M20 57 C8 51 10 36 21 34 C21 16 46 15 49 29 C61 28 62 37 61 40 C70 45 67 55 60 57" fill="none" stroke="#fff" strokeWidth="4" strokeLinecap="round" />
      <circle cx="33" cy="54" r="5.500" fill="none" stroke="#fff" strokeWidth="5" />
      <path d="M38 54 H55 M46 54 V59 M52 54 V59" stroke="#fff" strokeWidth="4.500" />
    </g>
  ),
  folder: (
    <g transform="translate(2 0)">
      <path d="M3 20 a4 4 0 0 1 4 -4 H24 L30 22 H73 a3 3 0 0 1 3 3 V70 H3Z" fill="#5fb8e4" />
      <path d="M3 26 H76 V70 a3 3 0 0 1 -3 3 H6 a3 3 0 0 1 -3 -3Z" fill="url(#fol)" />
      <path d="M3 68H76" stroke="#5bb2de" strokeWidth="1.500" />
    </g>
  ),
  finderwin: (
    <g>
      <rect x="-2" y="10" width="83" height="60" fill="#fafafa" />
      <rect x="-2" y="10" width="83" height="5" fill="#dfdfe1" />
      <rect x="-2" y="15" width="10" height="55" fill="#e2e2e5" />
      <path d="M0 20h6M0 24h6M0 28h6M0 33h6M0 37h6M0 42h6" stroke="#aaa" strokeWidth="1" />
      <rect x="9" y="19" width="7" height="3" fill="#1768e0" />
      {[18, 26, 34, 42, 50, 58].map((y) => (
        <path key={y} d={`M11 ${y}H80`} stroke="#c4c4c8" strokeWidth="5" strokeDasharray="4 4.200" />
      ))}
      <rect x="66" y="37" width="4" height="4" fill="#222" />
      <g transform="translate(50.500 50) scale(0.380)"><FinderArt /></g>
    </g>
  ),
  mailwin: <WindowArt />,
  termwin: (
    <g>
      <rect x="-3" y="8" width="87" height="64" rx="3" fill="#c6c9cc" />
      <rect x="-2" y="9" width="85" height="62" rx="3" fill="#080808" />
      <rect x="1" y="13" width="79" height="54" fill="#1e1e1e" />
      <path d="M3 16.500h38" stroke="#8a8a8a" strokeWidth="1.800" strokeDasharray="2.500 1" />
    </g>
  ),
  mailwin2: <WindowArt />,
  trash: (
    <g>
      <path d="M10 14 L22 2 L30 8 L42 0 L48 6 L56 0 L66 12 L70 18 H10Z" fill="#e9ebee" />
      <path d="M16 12 L26 5 L32 14Z M46 8 L58 4 L60 14Z" fill="#7d858f" />
      <path d="M32 10 L40 8 L42 16 H34Z" fill="#3cb6c4" />
      <path d="M42 12 L50 10 L54 17 H44Z" fill="#7a4a38" />
      <path d="M8 12 C10 20 70 20 72 12 L64 74 C60 82 20 82 16 74Z" fill="url(#tra)" opacity="0.950" />
      <path d="M8 12 C10 20 70 20 72 12" fill="none" stroke="#fff" strokeWidth="2" />
    </g>
  ),
};

function DockItem({ name, running }) {
  return (
    <div className="flex w-[97px] flex-col items-center">
      <svg viewBox="0 0 80 80" className="h-[80px] w-[80px] overflow-visible drop-shadow-[0_2px_1px_rgba(0,0,0,0.3)]">{ART[name]}</svg>
      {running && <span className="mt-[12px] h-[8px] w-[8px] rounded-full bg-black" />}
    </div>
  );
}

const APPS = [
  ["finder", 1], ["safari", 1], ["launchpad"], ["mail", 1], ["facetime"], ["messages"], ["maps"], ["photos"],
  ["contacts"], ["numbers"], ["sequel"], ["terminal", 1], ["vscode", 1], ["calendar"], ["pages"], ["reminders"],
  ["notes"], ["music"], ["podcasts"], ["tv"], ["appstore"], ["prefs"], ["spotify"],
];
const RECENT = [["stickies", 1], ["preview"], ["cloud", 1]];
const WINDOWS = [["folder"], ["finderwin"], ["mailwin"], ["termwin"], ["mailwin2"], ["trash"]];

function Dock() {
  const group = (items) => items.map(([n, r]) => <DockItem key={n} name={n} running={r} />);
  return (
    <footer className="ml-[76px] mt-[14px] flex h-[120px] w-[3208px] rounded-t-[10px] bg-[linear-gradient(90deg,#406183_0%,#40617f_10%,#3f5f7d_50%,#46627c_75%,#4c657e_100%)] pl-[7px] pt-[16px]">
      <svg className="h-0 w-0" aria-hidden="true">
        <defs>
          <G id="fnd" a="#26c8fb" b="#1a67ee" />
          <G id="sky" a="#2f74cc" b="#a4d4f4" />
          <G id="sky2" a="#6fa2e8" b="#c4dbf5" />
          <G id="saf" a="#22b7f2" b="#1c74e4" />
          <G id="lp" a="#c5d2d8" b="#77797b" />
          <G id="ft" a="#42ee7c" b="#1cc63c" />
          <G id="msg" a="#57c0fd" b="#167cf6" />
          <linearGradient id="met">
            <stop offset="0" stopColor="#8f8f93" /><stop offset="0.300" stopColor="#f8f8f8" /><stop offset="0.700" stopColor="#dcdcde" /><stop offset="1" stopColor="#858589" />
          </linearGradient>
          <G id="mus" a="#ffffff" b="#e3e7ec" />
          <G id="mun" a="#f7536b" m="#9c6ae8" b="#3f9df5" />
          <G id="pod" a="#cf69f2" b="#8a30c8" />
          <G id="tvg" a="#2e2e2e" b="#000000" />
          <G id="aps" a="#22c4fb" b="#1668ef" />
          <G id="prf" a="#bccdd6" b="#77797b" />
          <G id="cld" a="#40d8fd" b="#0c66d2" />
          <G id="fol" a="#83d3f8" b="#69c4f0" />
          <linearGradient id="tra">
            <stop offset="0" stopColor="#c9cbce" /><stop offset="0.350" stopColor="#f3f3f4" /><stop offset="0.700" stopColor="#e2e2e4" /><stop offset="1" stopColor="#c4c6c9" />
          </linearGradient>
        </defs>
      </svg>
      {group(APPS)}
      <span className="ml-[22px] mr-[19px] h-[88px] w-[2px] bg-[#1c3a58]" />
      {group(RECENT)}
      <span className="ml-[22px] mr-[20px] h-[88px] w-[2px] bg-[#1c3a58]" />
      {group(WINDOWS)}
    </footer>
  );
}

function Sea() {
  return (
    <svg className="absolute inset-x-0 bottom-0 h-[150px] w-[3360px]" aria-hidden="true">
      <defs>
        <filter id="sea" x="0" y="0" width="1" height="1">
          <feTurbulence type="fractalNoise" baseFrequency="0.035 0.160" numOctaves="4" seed="7" />
          <feColorMatrix values="0 0 0 0 0.230  0 0 0 0 0.360  0 0 0 0 0.450  1.800 1.200 0 0 -1.450" />
        </filter>
        <linearGradient id="seabg">
          <stop offset="0" stopColor="#03203a" /><stop offset="0.350" stopColor="#020f1c" /><stop offset="0.700" stopColor="#041320" /><stop offset="1" stopColor="#061a30" />
        </linearGradient>
      </defs>
      <rect width="3360" height="150" fill="url(#seabg)" />
      <rect width="3360" height="150" filter="url(#sea)" opacity="0.350" />
    </svg>
  );
}

export default function App() {
  return (
    <div className="relative h-[2100px] w-[3360px] overflow-hidden bg-[#4a7095] font-['Inter',sans-serif]">
      <Sea />
      <div className="relative flex h-full flex-col">
        <MenuBar />
        <div className="flex h-[1920px] shrink-0">
          <div className="relative w-[3324px] rounded-[10px] shadow-[0_0_6px_rgba(0,0,0,0.5)]">
            <Toolbar />
            <Page />
            <div className="h-[20px] bg-[linear-gradient(180deg,#7f838b_0px,#a5a9b2_5px,#b8bdc8_12px,#bcc1cb_20px)]" />
            <ReadingPanel />
          </div>
          <BackWindow />
        </div>
        <Dock />
      </div>
    </div>
  );
}
